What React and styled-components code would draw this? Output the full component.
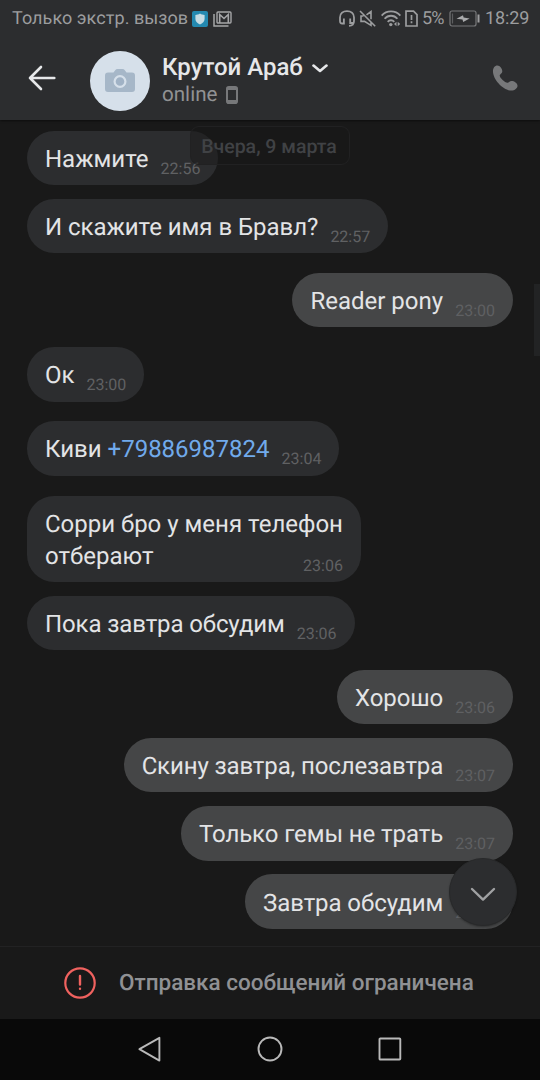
import React from 'react';
import styled, { createGlobalStyle } from 'styled-components';

const GlobalStyle = createGlobalStyle`
    * {
        box-sizing: border-box;
    }

    body {
        margin: 0;
        background: #191919;
        font-family: Roboto, "Noto Sans", sans-serif;
        text-rendering: geometricPrecision;
    }
`;

const Screen = styled.div`
    display: flex;
    flex-direction: column;
    width: 540px;
    height: 1080px;
    overflow: hidden;
    background: #191919;
`;

// Top: system status + dialog header share one background
const Top = styled.header`
    flex: 0 0 120px;
    background: #2c2d2f;
    box-shadow: 0 1px 2px rgba(0, 0, 0, 0.5);
`;

const StatusBar = styled.div`
    display: flex;
    align-items: center;
    height: 36px;
    padding: 1px 12px 0;
    font-size: 18px;
    line-height: 35px;
    color: #9c9d9f;
    white-space: nowrap;

    svg {
        display: block;
        flex: none;
    }
`;

const Carrier = styled.span`
    width: 180px;
    letter-spacing: 0.06px;
`;

const StatusIcons = styled.div`
    display: flex;
    align-items: center;
    gap: ${({ $gap }) => $gap};
    margin-left: ${({ $push }) => ($push ? 'auto' : '0')};
`;

const Percent = styled.span`
    width: 23px;
    margin-left: 4px;
    letter-spacing: -0.8px;
`;

const Clock = styled.span`
    width: 43px;
    margin-left: 5px;
    letter-spacing: -0.1px;
`;

const DialogBar = styled.div`
    display: flex;
    align-items: center;
    height: 84px;
    padding: 6px 22px 0 28px;
`;

const BackIcon = styled.svg`
    flex: none;
    margin: -6px 34px 0 0;
`;

const Avatar = styled.div`
    display: flex;
    align-items: center;
    justify-content: center;
    flex: none;
    width: 60px;
    height: 60px;
    border-radius: 50%;
    background: #d6e0ea;
`;

const Peer = styled.div`
    display: flex;
    flex-direction: column;
    flex: 1;
    margin: -2px 0 0 12px;
`;

const PeerName = styled.div`
    display: flex;
    align-items: center;
    gap: 9px;
    height: 30px;
    font-size: 24px;
    font-weight: 500;
    line-height: 30px;
    color: #e6e7e9;

    svg {
        margin-top: 3px;
    }
`;

const PeerStatus = styled.div`
    display: flex;
    align-items: center;
    gap: 9px;
    height: 26px;
    font-size: 20.6px;
    line-height: 26px;
    color: #919294;
`;

const CallIcon = styled.svg`
    flex: none;
    margin-top: -7px;
`;

const Dialog = styled.main`
    position: relative;
    display: flex;
    flex-direction: column;
    flex: 1;
    padding: 10.6px 27px 0;
`;

const Bubble = styled.div`
    align-self: ${({ $own }) => ($own ? 'flex-end' : 'flex-start')};
    flex: none;
    margin-bottom: ${({ $loose }) => ($loose ? '19.8px' : '13.8px')};
    padding: 12.1px 18px 10.3px;
    border-radius: 27.2px;
    background: ${({ $own }) => ($own ? '#454647' : '#2c2d2f')};
    font-size: 24px;
    line-height: 32px;
    color: #e3e4e6;
    white-space: pre;
`;

const Line = styled.div`
    display: flex;
    align-items: flex-end;
    justify-content: space-between;
    gap: 12px;
    height: 32px;
`;

const Text = styled.span`
    letter-spacing: ${({ $tracking = 0 }) => $tracking}px;
`;

const Time = styled.span`
    margin-bottom: -4px;
    font-size: 16px;
    line-height: 20px;
    color: ${({ $own }) => ($own ? '#5f6062' : '#606163')};
`;

const Phone = styled.span`
    color: #71aaeb;
`;

const DateBadge = styled.div`
    position: absolute;
    top: 6px;
    left: 190px;
    width: 160px;
    height: 39px;
    padding-right: 2px;
    border: 1px solid #212122;
    border-radius: 9px;
    background: rgba(25, 25, 25, 0.45);
    font-size: 19.5px;
    font-weight: 500;
    line-height: 39px;
    text-align: center;
    color: #404245;
`;

const ScrollThumb = styled.div`
    position: absolute;
    top: 164px;
    right: 0;
    width: 6px;
    height: 72px;
    background: #222324;
`;

const ScrollDown = styled.button`
    position: absolute;
    right: 23px;
    bottom: 20px;
    display: flex;
    align-items: center;
    justify-content: center;
    width: 68px;
    height: 68px;
    padding: 4px 0 0;
    border: 1px solid #28292a;
    border-radius: 50%;
    background: #2c2d2f;
    box-shadow: 0 1px 2px rgba(0, 0, 0, 0.3);
`;

const Restriction = styled.footer`
    display: flex;
    align-items: center;
    flex: 0 0 73px;
    gap: 23px;
    padding: 0 0 1px 64px;
    border-top: 1px solid #222223;
    font-size: 22.5px;
    font-weight: 500;
    color: #909194;
`;

const NavBar = styled.nav`
    display: flex;
    align-items: center;
    justify-content: center;
    flex: 0 0 61px;
    gap: 92px;
    padding-bottom: 2px;
    background: #090909;
`;

const MESSAGES = [
    { text: 'Нажмите', time: '22:56' },
    { text: 'И скажите имя в Бравл?', time: '22:57', loose: true, tracking: -0.04 },
    { text: 'Reader pony', time: '23:00', own: true, loose: true },
    { text: 'Ок', time: '23:00', loose: true },
    { text: 'Киви ', phone: '+79886987824', time: '23:04', loose: true },
    { text: 'Сорри бро у меня телефон\nотберают', time: '23:06' },
    { text: 'Пока завтра обсудим', time: '23:06', loose: true, tracking: -0.12 },
    { text: 'Хорошо', time: '23:06', own: true, tracking: -0.1 },
    { text: 'Скину завтра, послезавтра', time: '23:07', own: true, tracking: -0.13 },
    { text: 'Только гемы не трать', time: '23:07', own: true, tracking: -0.08 },
    { text: 'Завтра обсудим', time: '23:07', own: true, tracking: -0.08 }
];

// The time always sits at the end of the last line
const Message = ({ text, phone, time, own, loose, tracking }) => {
    const lines = text.split('\n');
    return (
        <Bubble $own={own} $loose={loose}>
            {lines.map((line, i) => (
                <Line key={line}>
                    <Text $tracking={tracking}>{line}{phone && <Phone>{phone}</Phone>}</Text>
                    {i === lines.length - 1 && <Time $own={own}>{time}</Time>}
                </Line>
            ))}
        </Bubble>
    );
};

const Status = () => (
    <StatusBar>
        <Carrier>Только экстр. вызов</Carrier>
        <StatusIcons $gap="5px">
            <svg width="16" height="16" viewBox="0 0 16 16">
                <rect width="16" height="16" rx="2" fill="#2489b0" />
                <path d="M8 2.6c1.5 1 3 1.4 4.600 1.400v4c0 2.600-2 4.300-4.600 5.500-2.600-1.200-4.600-2.900-4.600-5.500V4C5 4 6.500 3.600 8 2.600z" fill="#c5dbe3" />
            </svg>
            <svg width="19" height="16" viewBox="0 0 19 16" fill="none" stroke="#a5a6a8">
                <path d="M1 3v12h14.500" strokeWidth="1.500" />
                <rect x="4" y="1" width="14" height="11" rx="1" strokeWidth="1.400" />
                <path d="M6.700 12V3.500l4.300 4 4.300-4V12" strokeWidth="1.600" />
            </svg>
        </StatusIcons>
        <StatusIcons $gap="4.500px" $push>
            <svg width="16" height="17" viewBox="0 0 16 17" fill="none" stroke="#9c9d9f" strokeWidth="1.800">
                <path d="M4.900 8.500v5H3.200C1.700 13.500 1 12.500 1 11V7.500C1 3.500 4 1.100 8 1.100s7 2.400 7 6.400V11c0 3.200-1.500 4.800-5 4.800" />
                <path d="M11.200 8.500v4.500H14" />
            </svg>
            <svg width="17" height="17" viewBox="0 0 17 17" fill="none" stroke="#9c9d9f" strokeWidth="1.600">
                <path d="M1 1l15.200 15.200M4.500 6H2v5.400h3.500l6.500 4V12M7.500 4.800l4.500-3.300v7.800" />
            </svg>
            <svg width="20" height="17" viewBox="0 0 20 17" fill="none" stroke="#9c9d9f" strokeWidth="1.800">
                <path d="M.6 5.600C5.500-.1 14.500-.1 19.400 5.600M3.600 8.800C7 4.700 13 4.700 16.400 8.800M6.700 11.900c1.800-2.200 4.800-2.200 6.600 0" />
                <circle cx="9.800" cy="14.600" r="1.700" fill="#9c9d9f" stroke="none" />
                <path d="M15.500 11.800v4.400l-2.500-2.200zM16.700 11.800v4.400l2.500-2.200z" fill="#9c9d9f" stroke="none" />
            </svg>
            <svg width="13" height="17" viewBox="0 0 13 17" fill="none" stroke="#9c9d9f" strokeWidth="1.700">
                <path d="M1 1.200h7.500L12 4.700V16H1zM6.500 5v5M6.500 11.200v2" />
            </svg>
        </StatusIcons>
        <StatusIcons $gap="4px">
            <Percent>5%</Percent>
            <svg width="31" height="17" viewBox="0 0 31 17" fill="none" stroke="#77787a" strokeWidth="1.200">
                <rect x="1" y="1" width="26" height="15" rx="2" />
                <path d="M3.500 3.500v10" stroke="#5c5d5f" />
                <path d="M29.500 4.500v8" stroke="#9c9d9f" strokeWidth="2" />
                <path d="M7.500 8.700l6.500-3.500.6 2.200 6 1-6.400 3.500-.7-2.400z" fill="#a9aaac" stroke="none" />
            </svg>
        </StatusIcons>
        <Clock>18:29</Clock>
    </StatusBar>
);

export default function App() {
    return (
        <Screen>
            <GlobalStyle />
            <Top>
                <Status />
                <DialogBar>
                    <BackIcon width="28" height="26" viewBox="0 0 28 26" fill="none" stroke="#e6e7e9" strokeWidth="2.600" strokeLinecap="round" strokeLinejoin="round">
                        <path d="M26.300 13H2M13 2L2 13l11 11" />
                    </BackIcon>
                    <Avatar>
                        <svg width="30" height="24" viewBox="0 0 30 24">
                            <path d="M3 3.500h5.500l1.700-2.300C10.800.4 11.500 0 12.500 0h5c1 0 1.700.4 2.300 1.200l1.700 2.300H27a3 3 0 0 1 3 3V20a3 3 0 0 1-3 3H3a3 3 0 0 1-3-3V6.500a3 3 0 0 1 3-3z" fill="#a6b7c8" />
                            <circle cx="15" cy="12.500" r="5.400" fill="#a0b2c5" stroke="#d6e0ea" strokeWidth="2.200" />
                        </svg>
                    </Avatar>
                    <Peer>
                        <PeerName>
                            Крутой Араб
                            <svg width="16" height="9" viewBox="0 0 16 9" fill="none" stroke="#e6e7e9" strokeWidth="2.600" strokeLinecap="round" strokeLinejoin="round">
                                <path d="M1.500 1.600L8 7l6.500-5.400" />
                            </svg>
                        </PeerName>
                        <PeerStatus>
                            online
                            <svg width="12" height="18" viewBox="0 0 12 18">
                                <rect x="1" y="1" width="10" height="16" rx="1.800" fill="none" stroke="#77787a" strokeWidth="2" />
                                <path d="M1 1h10v3H1zM1 14h10v3H1z" fill="#77787a" />
                            </svg>
                        </PeerStatus>
                    </Peer>
                    <CallIcon width="26" height="26" viewBox="0 0 27 26" fill="#77787a">
                        <path d="M1 6C1 2.500 3 0 5.500 0 8.500 0 10.700 3.500 10.700 6c0 2.500-2.700 3-2.700 4.500 0 2.500 5.500 7.500 8 7.500 1.500 0 2-2 4.300-2 2.700 0 6.200 2.200 6.200 5 0 2.600-2.800 5-6.500 5C11.500 26 1 14.500 1 6z" />
                    </CallIcon>
                </DialogBar>
            </Top>
            <Dialog>
                {MESSAGES.map((message) => (
                    <Message key={message.text} {...message} />
                ))}
                <DateBadge>Вчера, 9 марта</DateBadge>
                <ScrollThumb />
                <ScrollDown>
                    <svg width="26" height="15" viewBox="0 0 26 15" fill="none" stroke="#a0a1a3" strokeWidth="2.400" strokeLinecap="round" strokeLinejoin="round">
                        <path d="M2 2l11 10.600L24 2" />
                    </svg>
                </ScrollDown>
            </Dialog>
            <Restriction>
                <svg width="32" height="32" viewBox="0 0 32 32" fill="none" stroke="#f0625f" strokeWidth="2.200" strokeLinecap="round">
                    <circle cx="16" cy="16" r="14.700" />
                    <path d="M16 9v8.500M16 21.700v.1" strokeWidth="2.400" />
                </svg>
                Отправка сообщений ограничена
            </Restriction>
            <NavBar>
                <svg width="28" height="28" viewBox="0 0 28 28" fill="none" stroke="#b9b9b9" strokeWidth="1.900" strokeLinejoin="round">
                    <path d="M23.400 2.800v22.800L3.400 14.200z" />
                </svg>
                <svg width="28" height="28" viewBox="0 0 28 28" fill="none" stroke="#b9b9b9" strokeWidth="1.900">
                    <circle cx="14" cy="14" r="11.500" />
                </svg>
                <svg width="28" height="28" viewBox="0 0 28 28" fill="none" stroke="#b9b9b9" strokeWidth="1.900">
                    <rect x="3.500" y="3.500" width="20.800" height="21" rx="0.800" />
                </svg>
            </NavBar>
        </Screen>
    );
}
